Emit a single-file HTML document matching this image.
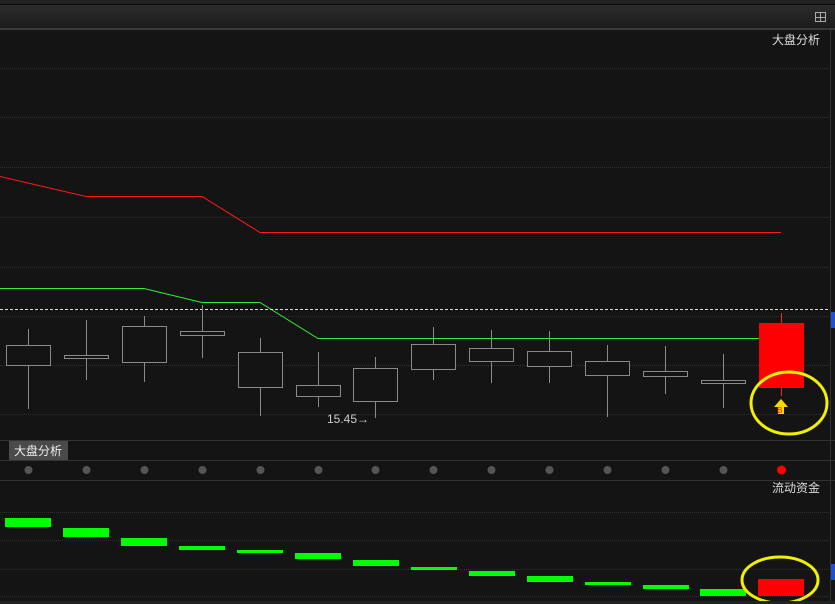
<!DOCTYPE html>
<html><head><meta charset="utf-8"><style>
html,body{margin:0;padding:0;background:#141414;width:835px;height:604px;overflow:hidden}
svg{display:block}
text{font-family:"Liberation Sans","Noto Sans CJK SC",sans-serif}
</style></head><body>
<svg width="835" height="604" xmlns="http://www.w3.org/2000/svg">
<defs><linearGradient id="hg" x1="0" y1="0" x2="0" y2="1"><stop offset="0" stop-color="#2c2c2c"/><stop offset="1" stop-color="#1c1c1c"/></linearGradient></defs>
<rect width="835" height="604" fill="#141414"/>
<rect y="0" width="835" height="4" fill="#222"/>
<rect y="4" width="835" height="1" fill="#0a0a0a"/>
<rect y="5" width="835" height="23" fill="url(#hg)"/>
<rect y="28" width="835" height="2" fill="#3a3a3a"/>
<g fill="none" stroke="#aaa" stroke-width="1"><rect x="815.5" y="12.5" width="10" height="9"/><line x1="820.5" y1="12" x2="820.5" y2="22"/><line x1="815" y1="17.5" x2="826" y2="17.5"/></g>
<text x="772" y="44" font-size="12" fill="#ddd">大盘分析</text>
<g stroke="#303030" stroke-dasharray="1,1" stroke-width="1">
<line x1="0" y1="68.5" x2="830" y2="68.5"/><line x1="0" y1="117.5" x2="830" y2="117.5"/><line x1="0" y1="167.5" x2="830" y2="167.5"/><line x1="0" y1="217.5" x2="830" y2="217.5"/><line x1="0" y1="267.5" x2="830" y2="267.5"/><line x1="0" y1="316.5" x2="830" y2="316.5"/><line x1="0" y1="365.5" x2="830" y2="365.5"/><line x1="0" y1="414.5" x2="830" y2="414.5"/>
<line x1="0" y1="512.5" x2="830" y2="512.5"/><line x1="0" y1="540.5" x2="830" y2="540.5"/><line x1="0" y1="569.5" x2="830" y2="569.5"/><line x1="0" y1="596.5" x2="830" y2="596.5"/>
</g>
<line x1="830.5" y1="30" x2="830.5" y2="604" stroke="#333"/>
<polyline points="0,176.5 86,196.5 202,196.5 260,232.5 781,232.5" fill="none" stroke="#ff1a1a" stroke-width="1"/>
<polyline points="0,288.5 144,288.5 202,302.5 260,302.5 318,338.5 781,338.5" fill="none" stroke="#33ee33" stroke-width="1"/>
<line x1="0" y1="309.5" x2="830" y2="309.5" stroke="#ddd" stroke-dasharray="3,2"/>
<g stroke="#8a8a8a" fill="none" stroke-width="1">
<line x1="28.5" y1="329" x2="28.5" y2="409"/><rect x="6.5" y="345.5" width="44" height="20" fill="#141414"/>
<line x1="86.5" y1="320" x2="86.5" y2="380"/><rect x="64.5" y="355.5" width="44" height="3" fill="#141414"/>
<line x1="144.5" y1="316" x2="144.5" y2="382"/><rect x="122.5" y="326.5" width="44" height="36" fill="#141414"/>
<line x1="202.5" y1="305" x2="202.5" y2="358"/><rect x="180.5" y="331.5" width="44" height="4" fill="#141414"/>
<line x1="260.5" y1="338" x2="260.5" y2="416"/><rect x="238.5" y="352.5" width="44" height="35" fill="#141414"/>
<line x1="318.5" y1="352" x2="318.5" y2="407"/><rect x="296.5" y="385.5" width="44" height="11" fill="#141414"/>
<line x1="375.5" y1="357" x2="375.5" y2="418"/><rect x="353.5" y="368.5" width="44" height="33" fill="#141414"/>
<line x1="433.5" y1="327" x2="433.5" y2="380"/><rect x="411.5" y="344.5" width="44" height="25" fill="#141414"/>
<line x1="491.5" y1="330" x2="491.5" y2="383"/><rect x="469.5" y="348.5" width="44" height="13" fill="#141414"/>
<line x1="549.5" y1="331" x2="549.5" y2="383"/><rect x="527.5" y="351.5" width="44" height="15" fill="#141414"/>
<line x1="607.5" y1="345" x2="607.5" y2="417"/><rect x="585.5" y="361.5" width="44" height="14" fill="#141414"/>
<line x1="665.5" y1="346" x2="665.5" y2="394"/><rect x="643.5" y="371.5" width="44" height="5" fill="#141414"/>
<line x1="723.5" y1="354" x2="723.5" y2="408"/><rect x="701.5" y="380.5" width="44" height="3" fill="#141414"/>
</g>
<line x1="781.5" y1="313" x2="781.5" y2="396" stroke="#ff2020"/>
<rect x="759" y="323" width="45" height="65" fill="#ff0000"/>
<text x="327" y="423" font-size="12" fill="#ccc" font-family="Liberation Mono,monospace">15.45→</text>
<polygon points="781,399 774,407 778,407 778,414 784,414 784,407 788,407" fill="#ffd800"/>
<text x="777" y="413" font-size="8" fill="#e02020">B</text>
<ellipse cx="789" cy="403" rx="38" ry="31" fill="none" stroke="#f0f000" stroke-width="3"/>
<rect x="831" y="312" width="4" height="16" fill="#2050d0"/>
<rect y="440" width="835" height="1" fill="#333"/>
<rect x="9" y="441" width="59" height="19" fill="#4a4a4a"/>
<text x="14" y="455" font-size="12" fill="#eee">大盘分析</text>
<rect y="460" width="835" height="1" fill="#333"/>
<g fill="#555"><circle cx="28.5" cy="470" r="4"/><circle cx="86.5" cy="470" r="4"/><circle cx="144.5" cy="470" r="4"/><circle cx="202.5" cy="470" r="4"/><circle cx="260.5" cy="470" r="4"/><circle cx="318.5" cy="470" r="4"/><circle cx="375.5" cy="470" r="4"/><circle cx="433.5" cy="470" r="4"/><circle cx="491.5" cy="470" r="4"/><circle cx="549.5" cy="470" r="4"/><circle cx="607.5" cy="470" r="4"/><circle cx="665.5" cy="470" r="4"/><circle cx="723.5" cy="470" r="4"/></g>
<circle cx="781.5" cy="470" r="4.5" fill="#ff0000"/>
<rect y="480" width="835" height="1" fill="#333"/>
<text x="772" y="492" font-size="12" fill="#ddd">流动资金</text>
<g fill="#00ff00">
<rect x="5" y="518" width="46" height="9"/><rect x="63" y="528" width="46" height="9"/><rect x="121" y="538" width="46" height="8"/><rect x="179" y="546" width="46" height="4"/><rect x="237" y="550" width="46" height="3"/><rect x="295" y="553" width="46" height="6"/><rect x="353" y="560" width="46" height="6"/><rect x="411" y="567" width="46" height="3"/><rect x="469" y="571" width="46" height="5"/><rect x="527" y="576" width="46" height="6"/><rect x="585" y="582" width="46" height="3"/><rect x="643" y="585" width="46" height="4"/><rect x="700" y="589" width="46" height="7"/>
</g>
<rect x="758" y="579" width="46" height="17" fill="#ff0000"/>
<ellipse cx="780" cy="580" rx="38" ry="23" fill="none" stroke="#f0f000" stroke-width="3"/>
<rect x="831" y="564" width="4" height="16" fill="#2050d0"/>
<rect y="601" width="835" height="3" fill="#222"/>
</svg>
</body></html>
